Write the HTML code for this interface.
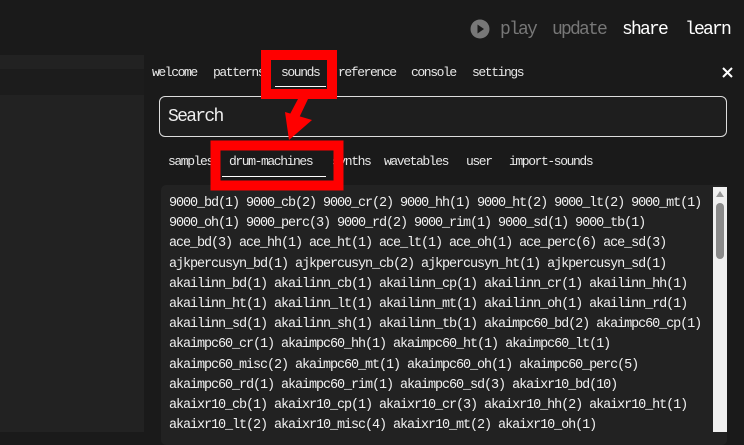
<!DOCTYPE html>
<html><head><meta charset="utf-8"><style>
*{margin:0;padding:0;box-sizing:border-box}
body{width:744px;height:432px;background:#1a1a1a;overflow:hidden;position:relative;font-family:"Liberation Mono","DejaVu Sans Mono",monospace;color:#eee}
.a{position:absolute;white-space:pre}
.nav{font-size:18px;letter-spacing:-1.8px;top:20px}
.tab{font-size:13px;letter-spacing:-1.4px;top:65px;color:#e8e8e8}
.sub{font-size:13px;letter-spacing:-1.4px;top:154px;color:#e8e8e8}
.list{left:169px;top:194px;font-size:13.5px;letter-spacing:-1.1px;line-height:20.2px;color:#f0f0f0}
</style></head><body>
<div class="a" style="left:0;top:55px;width:144px;height:14px;background:#222"></div>
<div class="a" style="left:0;top:69px;width:144px;height:26px;background:#1c1c1c"></div>
<div class="a" style="left:0;top:95px;width:144px;height:337px;background:#222"></div>

<svg class="a" style="left:470px;top:19px" width="20" height="20" viewBox="0 0 20 20"><circle cx="10" cy="10" r="9.5" fill="#777"/><path d="M7.5 5.5 L14 10 L7.5 14.5Z" fill="#1a1a1a"/></svg>
<div class="a nav" style="left:500px;color:#777">play</div>
<div class="a nav" style="left:552px;color:#777">update</div>
<div class="a nav" style="left:622px;color:#fff">share</div>
<div class="a nav" style="left:685px;color:#fff">learn</div>

<div class="a tab" style="left:152px">welcome</div>
<div class="a tab" style="left:213px">patterns</div>
<div class="a tab" style="left:281px">sounds</div>
<div class="a" style="left:275px;top:86px;width:51px;height:1px;background:#fff"></div>
<div class="a tab" style="left:338px">reference</div>
<div class="a tab" style="left:411px">console</div>
<div class="a tab" style="left:472px">settings</div>
<svg class="a" style="left:722px;top:67px" width="11" height="11"><path d="M1 1L10 10M10 1L1 10" stroke="#fff" stroke-width="2"/></svg>

<div class="a" style="left:159px;top:96px;width:568px;height:41px;border:1px solid #ddd;border-radius:6px;background:#1e1e1e"></div>
<div class="a" style="left:168px;top:107px;font-size:18px;letter-spacing:-1.7px;color:#eee">Search</div>

<div class="a sub" style="left:168px">samples</div>
<div class="a sub" style="left:229px">drum-machines</div>
<div class="a" style="left:222px;top:176px;width:104px;height:1px;background:#fff"></div>
<div class="a sub" style="left:332px">synths</div>
<div class="a sub" style="left:384px">wavetables</div>
<div class="a sub" style="left:466px">user</div>
<div class="a sub" style="left:509px">import-sounds</div>

<div class="a" style="left:161px;top:185px;width:566px;height:260px;background:#222;border-radius:5px"></div>
<div class="a" style="left:713px;top:187px;width:14px;height:245px;background:#f0f0f0"></div>
<div class="a" style="left:716px;top:203px;width:8px;height:56px;background:#8a8a8a;border-radius:4px"></div>
<svg class="a" style="left:715px;top:190px" width="10" height="8"><path d="M1 7L5 1L9 7Z" fill="#999"/></svg>

<div class="a list">9000_bd(1) 9000_cb(2) 9000_cr(2) 9000_hh(1) 9000_ht(2) 9000_lt(2) 9000_mt(1)
9000_oh(1) 9000_perc(3) 9000_rd(2) 9000_rim(1) 9000_sd(1) 9000_tb(1)
ace_bd(3) ace_hh(1) ace_ht(1) ace_lt(1) ace_oh(1) ace_perc(6) ace_sd(3)
ajkpercusyn_bd(1) ajkpercusyn_cb(2) ajkpercusyn_ht(1) ajkpercusyn_sd(1)
akailinn_bd(1) akailinn_cb(1) akailinn_cp(1) akailinn_cr(1) akailinn_hh(1)
akailinn_ht(1) akailinn_lt(1) akailinn_mt(1) akailinn_oh(1) akailinn_rd(1)
akailinn_sd(1) akailinn_sh(1) akailinn_tb(1) akaimpc60_bd(2) akaimpc60_cp(1)
akaimpc60_cr(1) akaimpc60_hh(1) akaimpc60_ht(1) akaimpc60_lt(1)
akaimpc60_misc(2) akaimpc60_mt(1) akaimpc60_oh(1) akaimpc60_perc(5)
akaimpc60_rd(1) akaimpc60_rim(1) akaimpc60_sd(3) akaixr10_bd(10)
akaixr10_cb(1) akaixr10_cp(1) akaixr10_cr(3) akaixr10_hh(2) akaixr10_ht(1)
akaixr10_lt(2) akaixr10_misc(4) akaixr10_mt(2) akaixr10_oh(1)</div>

<svg class="a" style="left:0;top:0" width="744" height="432">
<rect x="266" y="55" width="66" height="39" fill="none" stroke="#f00" stroke-width="10"/>
<rect x="215.5" y="145.5" width="123" height="40" fill="none" stroke="#f00" stroke-width="10"/>
<path d="M298 99 L308 99 L299 118 L289 116Z" fill="#f00"/>
<path d="M285 112 L312 120 L289 140Z" fill="#f00"/>
</svg>
</body></html>
